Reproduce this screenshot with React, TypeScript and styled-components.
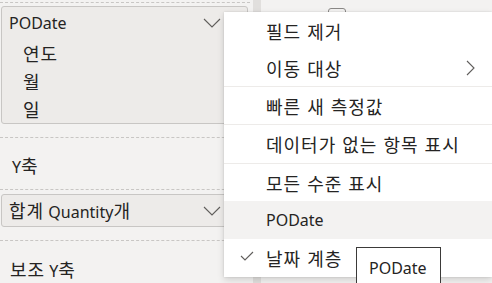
import React from "react";
import styled, { createGlobalStyle } from "styled-components";

const GlobalStyle = createGlobalStyle`
	html, body {
		margin: 0;
		padding: 0;
		width: 492px;
		height: 283px;
		overflow: hidden;
		background: #f3f2f1;
	}
	body {
		font-family: "Noto Sans", "Noto Sans CJK KR", sans-serif;
		color: #252423;
	}
`;

const Page = styled.div`
	position: relative;
	display: flex;
	width: 492px;
	height: 283px;
	overflow: hidden;
`;

// Korean runs are drawn a bit larger and looser, as Malgun Gothic is in the shot
const Ko = styled.span`
	font-family: "Noto Sans CJK KR", sans-serif;
	font-size: 18px;
	letter-spacing: 1px;
	word-spacing: 1px;
`;

const LeftPanel = styled.div`
	width: 253px;
	display: flex;
	flex-direction: column;
	padding-top: 2px;
	box-sizing: border-box;
`;

const Well = styled.div<{ $pad: string }>`
	border-top: 1px dashed #c8c6c4;
	width: 250px;
	padding: ${(p) => p.$pad};
	box-sizing: border-box;
`;

const Label = styled.div<{ $indent: number }>`
	font-size: 16px;
	line-height: 22px;
	padding-left: ${(p) => p.$indent}px;
`;

const FieldBox = styled.div<{ $h: number; $top: number }>`
	width: 247px;
	height: ${(p) => p.$h}px;
	margin-left: 1px;
	box-sizing: border-box;
	border: 1px solid #c8c6c4;
	border-radius: 3px;
	background: #edebe9;
	padding: ${(p) => p.$top}px 0 0 7px;
`;

const FieldHead = styled.div`
	display: flex;
	align-items: center;
	justify-content: space-between;
	font-size: 16px;
	line-height: 22px;
	padding-right: 26px;
`;

const SubList = styled.div`
	margin-top: 6px;
`;

const SubItem = styled.div`
	font-size: 16px;
	line-height: 26px;
	padding-left: 14px;
`;

const Strip = styled.div`
	width: 8px;
	background: #e1dfdd;
`;

const RightPanel = styled.div`
	flex: 1;
	padding: 8px 0 0 67px;
	box-sizing: border-box;
`;

const Checkbox = styled.div`
	width: 16px;
	height: 16px;
	border: 1px solid #8a8886;
	border-radius: 3px;
`;

const Menu = styled.div`
	position: absolute;
	left: 224px;
	top: 12px;
	right: 0;
	bottom: 6px;
	background: #ffffff;
	box-shadow: 0 3px 7px rgba(0, 0, 0, 0.14), 0 0 2px rgba(0, 0, 0, 0.12);
	display: flex;
	flex-direction: column;
`;

const Item = styled.div<{ $hover?: boolean; $h?: number }>`
	position: relative;
	height: ${(p) => p.$h ?? 38}px;
	display: flex;
	align-items: center;
	padding-left: 42px;
	padding-right: 17px;
	font-size: 16px;
	background: ${(p) => (p.$hover ? "#f3f2f1" : "#ffffff")};
	justify-content: space-between;
	flex-shrink: 0;
`;

const Sep = styled.div`
	height: 1px;
	background: #edebe9;
	flex-shrink: 0;
`;

const Check = styled.svg`
	position: absolute;
	left: 16px;
	top: 12px;
`;

const Tooltip = styled.div`
	position: absolute;
	left: 356px;
	top: 247px;
	width: 85px;
	height: 50px;
	box-sizing: border-box;
	border: 1px solid #3b3a39;
	background: #ffffff;
	font-size: 16px;
	line-height: 20px;
	padding: 10px 0 0 12px;
`;

const ChevronDown = () => (
	<svg width="18" height="10" viewBox="0 0 18 10">
		<path d="M1 1 L9 9 L17 1" fill="none" stroke="#605e5c" strokeWidth="1.1" />
	</svg>
);

export default function App() {
	return (
		<>
			<GlobalStyle />
			<Page>
				<LeftPanel>
					<Well $pad="3px 0 13px 0">
						<FieldBox $h={118} $top={5}>
							<FieldHead>
								<span>PODate</span>
								<ChevronDown />
							</FieldHead>
							<SubList>
								<SubItem><Ko>연도</Ko></SubItem>
								<SubItem><Ko>월</Ko></SubItem>
								<SubItem><Ko>일</Ko></SubItem>
							</SubList>
						</FieldBox>
					</Well>
					<Well $pad="16px 0 11px 0">
						<Label $indent={12}>Y<Ko>축</Ko></Label>
					</Well>
					<Well $pad="4px 0 13px 0">
						<FieldBox $h={33} $top={4}>
							<FieldHead>
								<span><Ko>합계</Ko> Quantity<Ko>개</Ko></span>
								<ChevronDown />
							</FieldHead>
						</FieldBox>
					</Well>
					<Well $pad="17px 0 0 0">
						<Label $indent={10}><Ko>보조</Ko> Y<Ko>축</Ko></Label>
					</Well>
				</LeftPanel>
				<Strip />
				<RightPanel>
					<Checkbox />
				</RightPanel>

				<Menu>
					<Item><Ko>필드 제거</Ko></Item>
					<Item $h={36}>
						<Ko>이동 대상</Ko>
						<svg width="9" height="16" viewBox="0 0 9 16">
							<path d="M1 1 L8 8 L1 15" fill="none" stroke="#605e5c" strokeWidth="1.1" />
						</svg>
					</Item>
					<Sep />
					<Item $h={37}><Ko>빠른 새 측정값</Ko></Item>
					<Sep />
					<Item><Ko>데이터가 없는 항목 표시</Ko></Item>
					<Sep />
					<Item $h={37}><Ko>모든 수준 표시</Ko></Item>
					<Item $hover>PODate</Item>
					<Item>
						<Check width="14" height="10" viewBox="0 0 14 10">
							<path d="M1 5 L5 9 L13 1" fill="none" stroke="#605e5c" strokeWidth="1.1" />
						</Check>
						<Ko>날짜 계층</Ko>
					</Item>
				</Menu>
				<Tooltip>PODate</Tooltip>
			</Page>
		</>
	);
}
